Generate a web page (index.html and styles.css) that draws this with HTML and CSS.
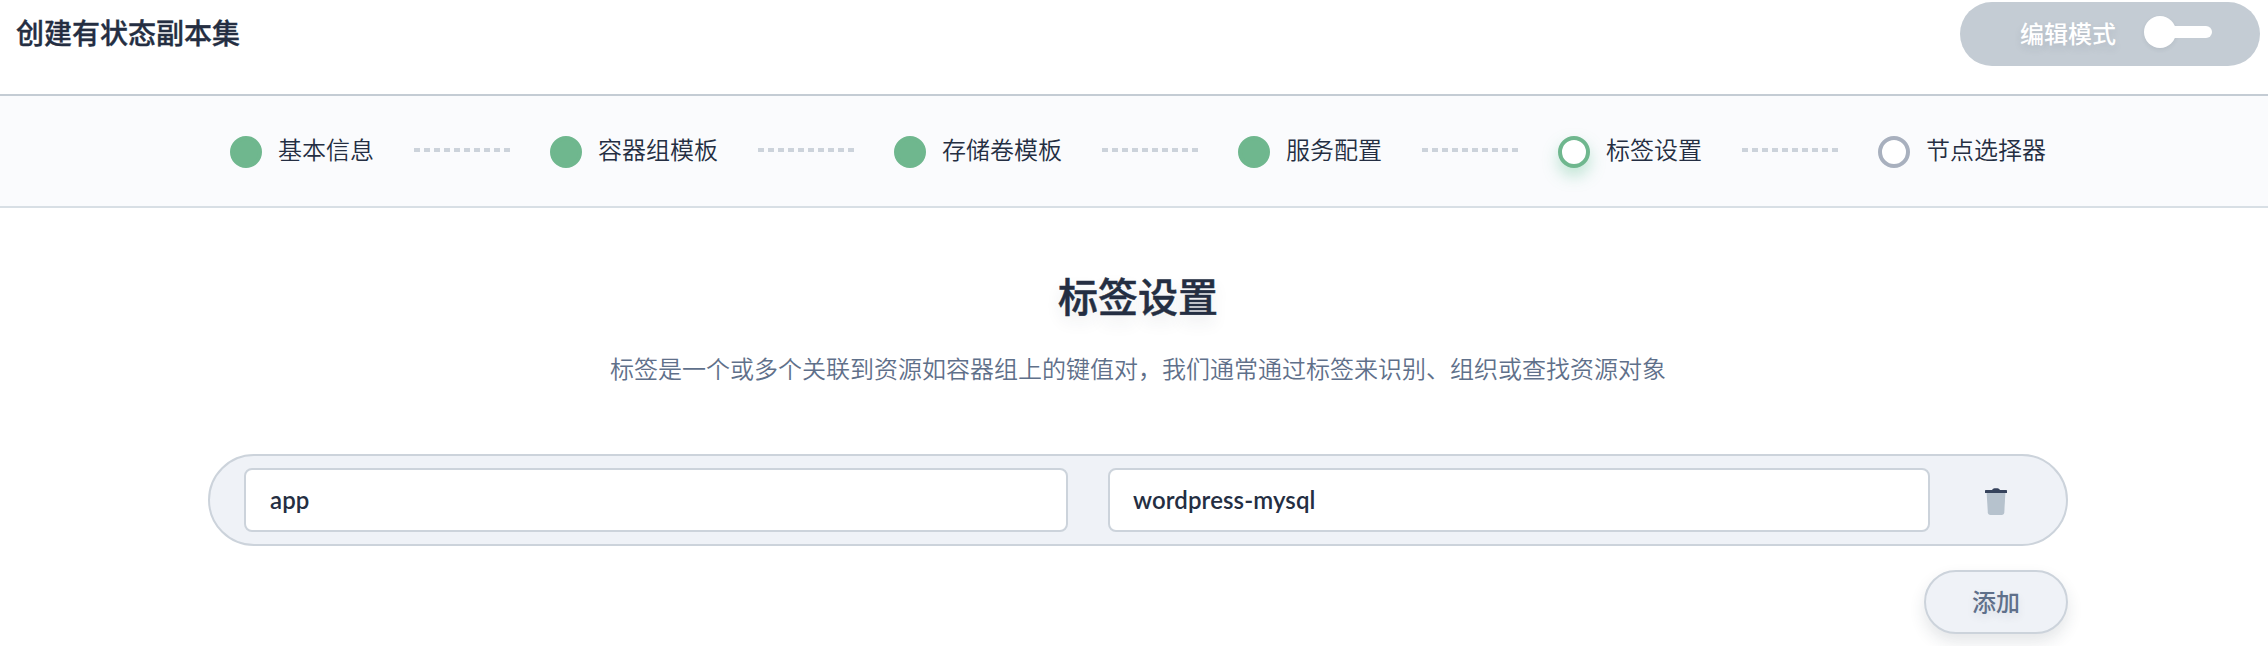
FILE: index.html
```html
<!DOCTYPE html>
<html lang="zh-CN">
<head>
<meta charset="utf-8">
<title>创建有状态副本集</title>
<link rel="stylesheet" href="styles.css">
</head>
<body>
<header class="header">
  <h1 class="header-title">创建有状态副本集</h1>
  <button class="mode" type="button"><span class="mode-label">编辑模式</span><span class="switch"><span class="knob"></span><span class="track"></span></span></button>
</header>
<nav class="steps">
  <div class="step"><i class="dot done"></i><span class="step-label">基本信息</span></div>
  <i class="dashes"></i>
  <div class="step"><i class="dot done"></i><span class="step-label">容器组模板</span></div>
  <i class="dashes"></i>
  <div class="step"><i class="dot done"></i><span class="step-label">存储卷模板</span></div>
  <i class="dashes"></i>
  <div class="step"><i class="dot done"></i><span class="step-label">服务配置</span></div>
  <i class="dashes"></i>
  <div class="step"><i class="dot current"></i><span class="step-label">标签设置</span></div>
  <i class="dashes"></i>
  <div class="step"><i class="dot"></i><span class="step-label">节点选择器</span></div>
</nav>
<main class="content">
  <h2 class="heading">标签设置</h2>
  <p class="desc">标签是一个或多个关联到资源如容器组上的键值对，我们通常通过标签来识别、组织或查找资源对象</p>
  <div class="row">
    <div class="field key"><span class="field-text">app</span></div>
    <div class="field value"><span class="field-text">wordpress-mysql</span></div>
    <svg class="trash" viewBox="0 0 24 30" width="24" height="30">
      <path d="M2.6 5H21.4L20.3 25.3Q20.1 28 17.6 28H6.5Q4 28 3.8 25.3Z" fill="#b6c2cd"/>
      <path d="M1 3.6Q1 3 1.8 3H8Q8.8 1.2 10.5 1.2H13.5Q15.2 1.2 16 3H22.2Q23 3 23 3.6V6H1Z" fill="#36435c"/>
    </svg>
  </div>
  <button class="add" type="button">添加</button>
</main>
</body>
</html>
```

FILE: styles.css
```css
* { box-sizing: border-box; }
body {
  margin: 0;
  height: 646px;
  overflow: hidden;
  background: #fff;
  color: #242e42;
  font-family: "Noto Sans CJK SC", sans-serif;
  font-size: 24px;
}
h1, h2, p { margin: 0; }
button { padding: 0; border: 0; font: inherit; }
.header {
  display: flex;
  justify-content: space-between;
  height: 96px;
  padding: 2px 8px 0 16px;
  border-bottom: 2px solid #c4ccd4;
}
.header-title { font-size: 28px; font-weight: 500; line-height: 61px; -webkit-text-stroke: .35px; }
.mode {
  display: flex;
  width: 300px;
  height: 64px;
  padding: 0 48px 0 60px;
  justify-content: space-between;
  border-radius: 32px;
  background: #c4ccd4;
  color: #fff;
}
.mode-label { font-weight: 500; line-height: 61px; text-shadow: 0 4px 8px rgba(36, 46, 66, .1); }
.switch { display: flex; align-items: center; height: 60px; }
.knob {
  width: 32px;
  height: 32px;
  border-radius: 50%;
  background: #fff;
  box-shadow: 0 2px 4px rgba(36, 46, 66, .08);
}
.track { width: 38px; height: 12px; margin-left: -2px; border-radius: 0 6px 6px 0; background: #fff; }
.steps {
  display: flex;
  gap: 40px;
  height: 112px;
  padding: 40px 222px 0 230px;
  border-bottom: 2px solid #d8dfe5;
  background: #fafbfd;
}
.step { display: flex; gap: 16px; height: 32px; }
.step-label { font-weight: 350; line-height: 25px; white-space: nowrap; }
.dot {
  width: 32px;
  height: 32px;
  border: 4px solid #a8b0be;
  border-radius: 50%;
  background: #fff;
}
.done { border-color: #6fb78e; background: #6fb78e; }
.current { border-color: #6fb78e; box-shadow: 0 8px 16px rgba(85, 188, 138, .36); }
.dashes {
  width: 96px;
  height: 4px;
  margin-top: 12px;
  background: repeating-linear-gradient(90deg, #ccd3db 0 6px, transparent 6px 10px);
}
.content {
  display: flex;
  flex-direction: column;
  padding: 57px 200px 0 208px;
}
.heading {
  font-size: 40px;
  font-weight: 500;
  line-height: 60px;
  text-align: center;
  -webkit-text-stroke: .5px;
  text-shadow: 0 8px 16px rgba(36, 46, 66, .1);
}
.desc { margin-top: 25px; color: #5f708a; font-weight: 350; line-height: 36px; text-align: center; }
.row {
  display: flex;
  height: 92px;
  margin-top: 68px;
  padding: 12px 34px;
  border: 2px solid #ccd3db;
  border-radius: 46px;
  background: #eff2f7;
}
.field {
  height: 64px;
  padding-left: 24px;
  border: 2px solid #ccd3db;
  border-radius: 8px;
  background: #fff;
  font-family: Lato, sans-serif;
  font-weight: 600;
  letter-spacing: .1px;
  line-height: 60px;
}
.key { width: 824px; }
.value { width: 822px; margin-left: 40px; padding-left: 23px; }
.trash { margin: 19px 0 0 54px; }
.add {
  align-self: flex-end;
  width: 144px;
  height: 64px;
  margin-top: 24px;
  border: 2px solid #ccd3db;
  border-radius: 32px;
  background: #eff2f7;
  box-shadow: 0 8px 16px rgba(36, 46, 66, .12);
  color: #5f708a;
  font-weight: 500;
  line-height: 56px;
  padding-bottom: 2px;
  text-shadow: 0 4px 8px rgba(36, 46, 66, .1);
}
```
